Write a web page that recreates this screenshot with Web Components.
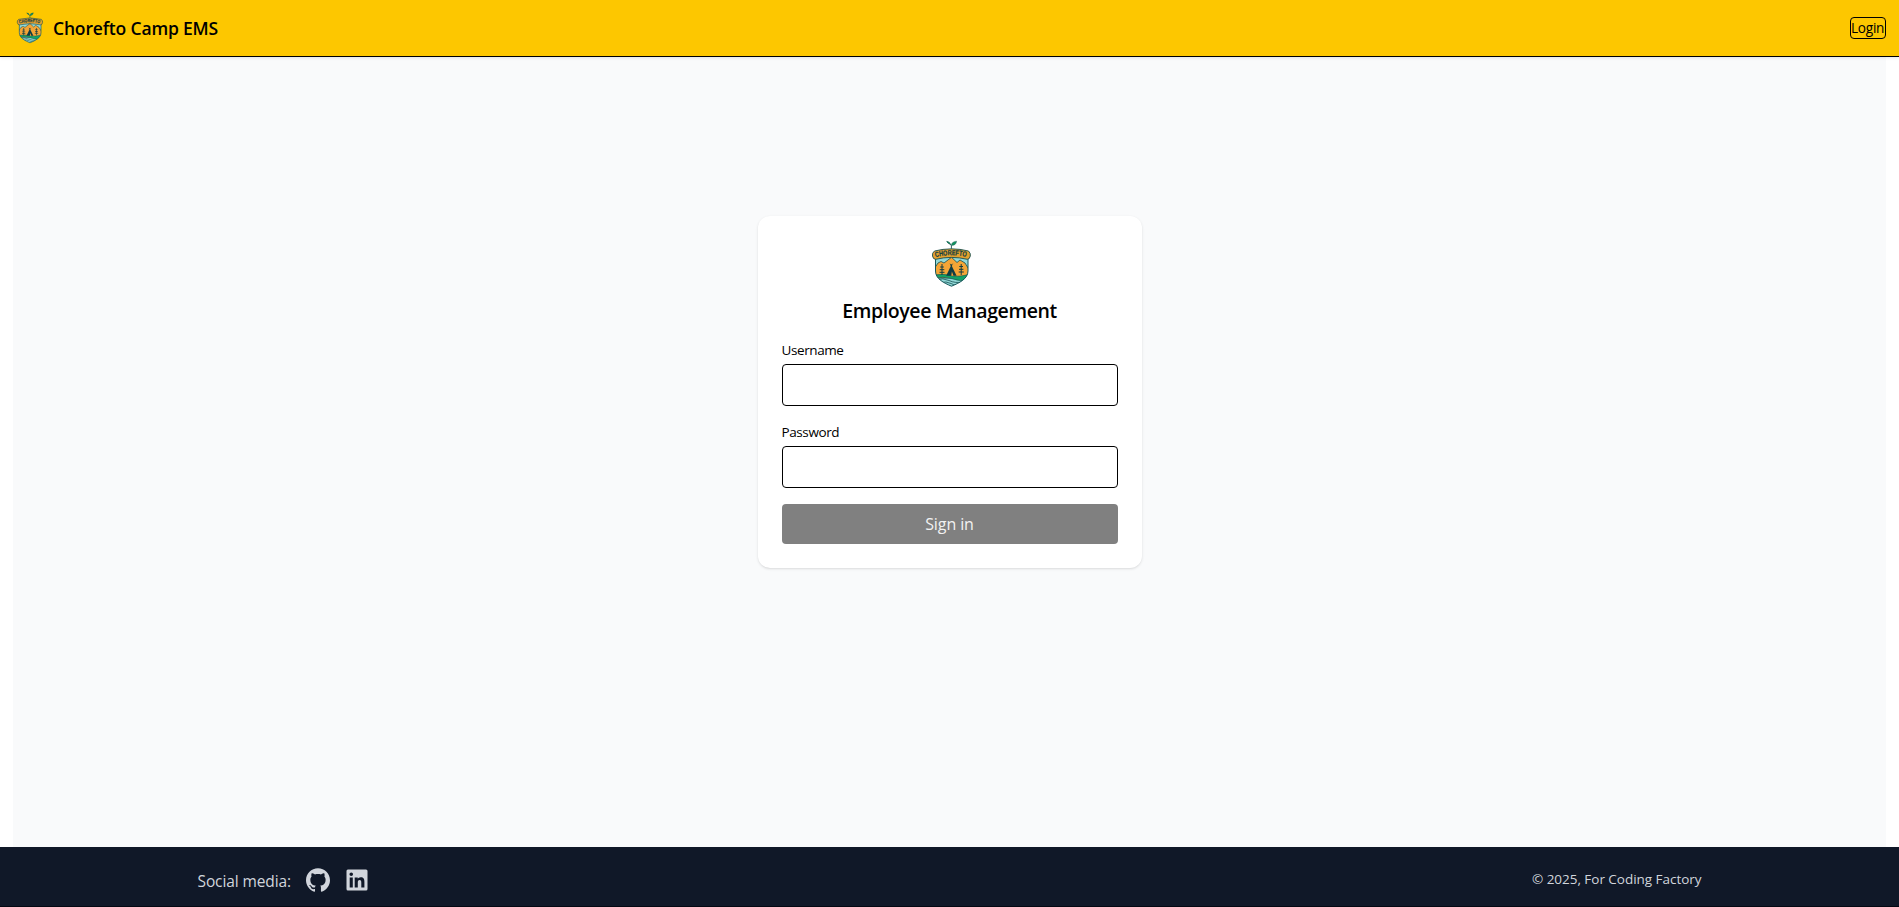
<!DOCTYPE html>
<html lang="en">
<head>
<meta charset="utf-8">
<title>Chorefto Camp EMS</title>
<style>
html,body{margin:0;height:100%}
body{font-family:"Open Sans","Noto Sans",sans-serif;color:#000;background:#fff}
</style>
</head>
<body>
<app-shell></app-shell>
<script>
const define=(name,html)=>customElements.define(name,class extends HTMLElement{
  constructor(){super();this.attachShadow({mode:"open"}).innerHTML=html;}
});

define("camp-logo",`<style>:host{display:block;width:48px;height:48px;flex:none}svg{display:block;width:100%;height:100%}</style>
<svg viewBox="0 0 48 48">
<defs><clipPath id="c"><path d="M9.5 15H42V31C42 39 33 43 25.5 46.2 18 43 9.5 39 9.5 31Z"/></clipPath></defs>
<g clip-path="url(#c)">
<path fill="#92d9d8" d="M8 14H44V48H8Z"/>
<path fill="#f4a536" stroke="#174f50" stroke-width=".8" d="M8 29 12 23 15 21.500 18 23 25.500 17.300 31 22.500 34 20 39 23 44 31V38H8Z"/>
<path fill="#13a266" stroke="#174f50" stroke-width=".6" d="M8 35Q17 33.500 25 35.500T44 34V40Q34 42 25 38.500 17 36 8 38.500Z"/>
<path fill="none" stroke="#174f50" stroke-width=".8" d="M10 40Q17 37.500 23 40.500T38 42M15 42.500Q20 41 25 43.500T32 44"/>
</g>
<path fill="none" stroke="#17575a" stroke-width="1" d="M9.500 18V31C9.500 39 18 43 25.500 46.200 33 43 42 39 42 31V18"/>
<path fill="#103c42" d="M25.300 25 20.200 35.800H30.600Z"/>
<path fill="#f4a536" d="M25.900 31.500 25.300 35.700H27.500Z"/>
<path fill="none" stroke="#103c42" stroke-width="1" d="M24.200 23.800 26 26M26.500 23.800 24.600 26M16 24V35M14.200 27H17.800M13.700 29.700H18.300M13.500 32.300H18.500M35.200 24V35M33.300 26.500H37M33 29.300H37.400M32.700 32H37.800"/>
<path fill="#e5a02d" stroke="#174f50" stroke-width=".9" d="M8.500 11Q25.500 6.700 42.500 11 45 13.500 44.300 16 43.500 19.500 41.300 19.300 25.500 15.500 9.700 19.300 7.300 19.500 6.500 16 5.800 13 8.500 11Z"/>
<path id="p" fill="none" d="M9.500 17.300Q25.500 13.100 41.500 17.300"/>
<text font-family="Liberation Sans,sans-serif" font-size="7.300" font-weight="700" fill="#123f42" stroke="#123f42" stroke-width=".2"><textPath href="#p" textLength="31" lengthAdjust="spacingAndGlyphs">CHOREFTO</textPath></text>
<path fill="none" stroke="#174f50" stroke-width=".9" d="M25.400 8.800V5.500Q24 4 21 1.800"/>
<path fill="#11935d" stroke="#174f50" stroke-width=".4" d="M25.300 5.500Q25.600 1.500 30.600 1.200 30.200 5.400 25.300 5.500ZM20.500 1.300Q24 1.600 24.600 4.400 21.800 3.800 20.500 1.300Z"/>
</svg>`);

define("login-link",`<style>:host{display:block}a{display:block;box-sizing:border-box;width:36px;height:22px;border:1px solid #000;border-radius:4px;font-size:13.6px;line-height:20px;letter-spacing:-.25px;white-space:nowrap;color:#000;text-decoration:none}</style><a><slot></slot></a>`);

define("app-header",`<style>:host{display:flex;position:relative;box-sizing:border-box;height:57px;flex:none;align-items:center;justify-content:space-between;padding:0 13px;border-bottom:1px solid #000;background:#fdc700;box-shadow:0 1px 3px #0000001a}
.brand{display:flex;align-items:center;gap:8px}camp-logo{width:32px;height:32px}
span{font-size:17.5px;font-weight:600;line-height:28px;letter-spacing:-.17px}</style>
<div class="brand"><camp-logo></camp-logo><span>Chorefto Camp EMS</span></div><login-link>Login</login-link>`);

define("form-field",`<style>:host{display:block}label{display:block;font-size:13.5px;line-height:20px;letter-spacing:-.4px;margin-bottom:4px}
input{display:block;box-sizing:border-box;width:100%;height:42px;border:1px solid #000;border-radius:4px;background:#fff;padding:8px;outline:0}</style>
<label><slot></slot></label><input>`);

define("submit-button",`<style>:host{display:block}button{display:block;width:100%;height:40px;border:0;border-radius:4px;background:#808080;color:#f2f2f2;font:400 16px/24px "Open Sans",sans-serif;letter-spacing:-.1px;padding:0}</style><button><slot></slot></button>`);

define("login-card",`<style>:host{display:flex;flex-direction:column;box-sizing:border-box;width:384px;height:352px;padding:24px;border-radius:12px;background:#fff;box-shadow:0 1px 3px #0000001a,0 1px 2px -1px #0000001a}
camp-logo{align-self:center}h1{margin:9px 0 15px;text-align:center;font-size:19.5px;font-weight:600;line-height:28px;letter-spacing:-.38px}
form{display:flex;flex-direction:column;gap:16px}</style>
<camp-logo></camp-logo><h1>Employee Management</h1>
<form><form-field>Username</form-field><form-field>Password</form-field><submit-button>Sign in</submit-button></form>`);

define("app-footer",`<style>:host{display:block;box-sizing:border-box;height:60px;flex:none;background:#101828;border-bottom:1px solid #030712;color:#d1d5dc}
.in{display:flex;box-sizing:border-box;width:1504px;height:59px;margin:0 auto;align-items:center;justify-content:space-between;padding:6px 0 0}
.social{display:flex;align-items:center}.label{font-size:15.5px;line-height:24px;width:93px;padding-top:2px;margin-right:15px;white-space:nowrap;letter-spacing:-.1px}
svg{display:block;width:24px;height:24px;fill:currentColor}svg+svg{margin-left:15px}
.copy{font-size:13.5px;line-height:20px;letter-spacing:-.03px;margin-bottom:2px}</style>
<div class="in"><div class="social"><span class="label">Social media:</span>
<svg viewBox="0 0 24 24"><path d="M12 .297c-6.630 0-12 5.373-12 12 0 5.303 3.438 9.800 8.205 11.385.6.113.82-.258.82-.577 0-.285-.01-1.040-.015-2.040-3.338.724-4.042-1.610-4.042-1.610C4.422 18.070 3.633 17.700 3.633 17.700c-1.087-.744.084-.729.084-.729 1.205.084 1.838 1.236 1.838 1.236 1.070 1.835 2.809 1.305 3.495.998.108-.776.417-1.305.76-1.605-2.665-.3-5.466-1.332-5.466-5.930 0-1.310.465-2.380 1.235-3.220-.135-.303-.54-1.523.105-3.176 0 0 1.005-.322 3.300 1.230.96-.267 1.980-.399 3-.405 1.020.006 2.040.138 3 .405 2.280-1.552 3.285-1.230 3.285-1.230.645 1.653.24 2.873.12 3.176.765.84 1.230 1.910 1.230 3.220 0 4.610-2.805 5.625-5.475 5.920.42.36.81 1.096.81 2.220 0 1.606-.015 2.896-.015 3.286 0 .315.21.69.825.57C20.565 22.092 24 17.592 24 12.297c0-6.627-5.373-12-12-12"/></svg>
<svg viewBox="0 0 24 24"><path fill-rule="evenodd" d="M3.100 1.500H21A1.500 1.500 0 0 1 22.500 3V21A1.500 1.500 0 0 1 21 22.500H3.100A1.500 1.500 0 0 1 1.500 21V3A1.500 1.500 0 0 1 3.100 1.500ZM4.700 9.500V19.500H7.800V9.500ZM6.250 4.500a1.800 1.800 0 1 0 0 3.600 1.800 1.800 0 0 0 0-3.600ZM9.700 9.500V19.500H12.800V14.500C12.800 13 13.200 12 14.600 12S16.300 13.200 16.300 14.600V19.500H19.400V14C19.400 11.200 18.700 9.200 15.700 9.200 14.200 9.200 13.200 10 12.750 10.800V9.500Z"/></svg></div>
<span class="copy">© 2025, For Coding Factory</span></div>`);

define("app-shell",`<style>:host{display:flex;flex-direction:column;height:907px}main{display:flex;flex:1;margin:0 13px;background:#f9fafb;align-items:flex-start;justify-content:center;padding-top:159px;box-sizing:border-box;min-height:0}</style>
<app-header></app-header><main><login-card></login-card></main><app-footer></app-footer>`);
</script>
</body>
</html>
